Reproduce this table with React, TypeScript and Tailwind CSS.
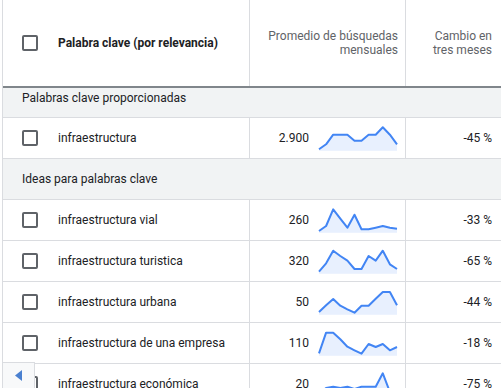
const rows = [
  { kw: 'infraestructura', n: '2.900', chg: '-45 %', pts: [23.3, 18.3, 8.7, 8.7, 8.7, 14.7, 14.7, 8.7, 8.7, 1.3, 8.7, 18.3] },
];

const ideas = [
  { kw: 'infraestructura vial', n: '260', chg: '-33 %', pts: [23, 18, 1.3, 10.7, 19.7, 6.7, 21.3, 21.3, 19.7, 18, 19.7, 20.7] },
  { kw: 'infraestructura turistica', n: '320', chg: '-65 %', pts: [22.7, 14.3, 1.7, 7, 11.7, 20, 20, 7, 11.7, 1.7, 15.3, 20] },
  { kw: 'infraestructura urbana', n: '50', chg: '-44 %', pts: [22, 15.3, 9, 15.7, 19.3, 22.7, 15.7, 15.7, 8.7, 2, 2, 15.3] },
  { kw: 'infraestructura de una empresa', n: '110', chg: '-18 %', pts: [22.3, 1.7, 1.7, 8.3, 15.7, 19.3, 22.7, 13, 16, 13, 19.3, 16] },
  { kw: 'infraestructura económica', n: '20', chg: '-75 %', pts: [22, 16, 14.7, 16, 14.7, 17, 14.7, 14.7, 14.7, 1.3, 20, 22] },
];

function Checkbox() {
  return <div className="h-4 w-4 shrink-0 rounded-[2px] border-2 border-[#5f6368] bg-white" />;
}

function Sparkline({ pts }: { pts: number[] }) {
  const step = 78 / (pts.length - 1);
  const line = pts.map((y, i) => `${(1 + i * step).toFixed(1)},${y}`).join(' ');
  const area = `1,24.7 ${line} 79,24.7`;
  return (
    <svg width="80" height="25" viewBox="0 0 80 25" className="shrink-0">
      <polygon points={area} fill="#e8f0fe" />
      <polyline points={line} fill="none" stroke="#4285f4" strokeWidth="2" strokeLinejoin="round" />
    </svg>
  );
}

function KeywordRow({ kw, n, chg, pts }: { kw: string; n: string; chg: string; pts: number[] }) {
  return (
    <div className="flex h-[41px] border-b border-[#dadce0]">
      <div className="flex w-[247px] shrink-0 items-center gap-5 border-r border-[#dadce0] pl-[19px]">
        <Checkbox />
        <span className="whitespace-nowrap">{kw}</span>
      </div>
      <div className="flex w-[156px] shrink-0 items-center justify-end gap-[9px] border-r border-[#dadce0] pr-[7px]">
        <span>{n}</span>
        <Sparkline pts={pts} />
      </div>
      <div className="flex flex-1 items-center justify-end pr-[9px]">{chg}</div>
    </div>
  );
}

export default function App() {
  return (
    <div className="relative h-[388px] w-[501px] overflow-hidden bg-white font-['Roboto',Arial,sans-serif] text-[12px] text-[#202124]">
      <div className="ml-[2px] border-l border-[#dadce0]">
        <div className="flex h-[88px] border-b-2 border-[#80868b]">
          <div className="flex w-[247px] shrink-0 items-center gap-5 border-r border-[#dadce0] pl-[19px]">
            <Checkbox />
            <span className="font-bold">Palabra clave (por relevancia)</span>
          </div>
          <div className="flex w-[156px] shrink-0 items-center justify-end border-r border-[#dadce0] pr-[7px] text-right leading-[14px] text-[#5f6368]">
            <span>
              Promedio de búsquedas
              <br />
              mensuales
            </span>
          </div>
          <div className="flex flex-1 items-center justify-end pr-[9px] text-right leading-[14px] text-[#5f6368]">
            <span>
              Cambio en
              <br />
              tres meses
            </span>
          </div>
        </div>
        <div className="h-[30px] border-b border-[#dadce0] bg-[#f1f3f4] pl-[19px] pt-[3px] leading-[14px]">
          Palabras clave proporcionadas
        </div>
        {rows.map((r) => (
          <KeywordRow key={r.kw} {...r} />
        ))}
        <div className="flex h-[41px] items-center border-b border-[#dadce0] bg-[#f1f3f4] pl-[19px]">
          Ideas para palabras clave
        </div>
        {ideas.map((r) => (
          <KeywordRow key={r.kw} {...r} />
        ))}
      </div>
      <button className="absolute bottom-0 left-[2px] flex h-[26px] w-[33px] items-center justify-center border border-b-0 border-[#dadce0] bg-[#f8f9fa]">
        <svg width="7" height="11" viewBox="0 0 7 11">
          <polygon points="7,0 0,5.5 7,11" fill="#4a80d0" />
        </svg>
      </button>
    </div>
  );
}
